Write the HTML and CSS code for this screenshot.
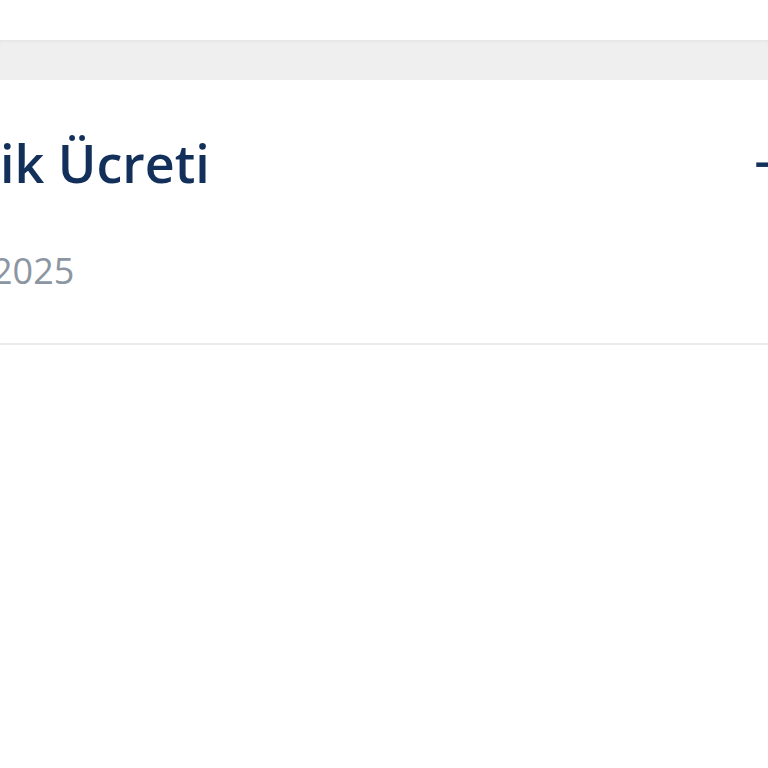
FILE: index.html
```html
<!DOCTYPE html>
<html lang="tr">
<head>
<meta charset="utf-8">
<link rel="stylesheet" href="styles.css">
</head>
<body>
<div class="top"></div>
<div class="band"></div>
<div class="card">
  <div class="row">
    <div class="title">ik Ücreti</div>
    <div class="amount">−₺250,00</div>
  </div>
  <div class="date">2025</div>
</div>
</body>
</html>
```
FILE: styles.css
```css
html, body {
  margin: 0;
  padding: 0;
  background: #ffffff;
  overflow: hidden;
  width: 768px;
  height: 768px;
}
body {
  font-family: "Open Sans", "Noto Sans", sans-serif;
}
.top {
  height: 40px;
  background: #ffffff;
}
.band {
  height: 40px;
  background: #efefef;
  box-shadow: inset 0 3px 4px -2px rgba(0, 0, 0, 0.06);
}
.card {
  height: 263px;
  border-bottom: 2px solid #ebebef;
  overflow: hidden;
}
.row {
  display: flex;
  justify-content: space-between;
  padding-top: 51px;
  white-space: nowrap;
}
.title {
  font-size: 52px;
  font-weight: 600;
  line-height: 64px;
  color: #12305a;
}
.amount {
  flex: 0 0 14px;
  width: 14px;
  font-size: 52px;
  font-weight: 600;
  line-height: 64px;
  color: #12305a;
}
.date {
  margin-top: 52px;
  margin-left: -8px;
  font-size: 36px;
  line-height: 48px;
  color: #8b96a2;
}
```
